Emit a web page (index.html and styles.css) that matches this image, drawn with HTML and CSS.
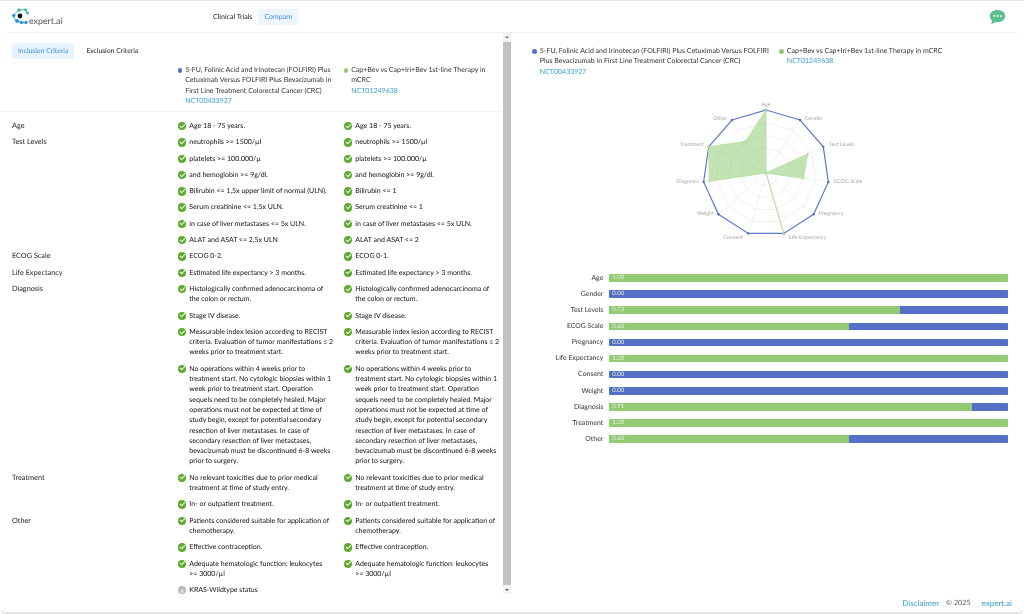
FILE: index.html
```html
<!DOCTYPE html>
<html lang="en">
<head>
<meta charset="utf-8">
<title>expert.ai Compare</title>
<link rel="stylesheet" href="styles.css">
</head>
<body>
<div class="app">
  <header class="topbar">
    <div class="brand">
      <svg class="logo" viewBox="0 0 20 18" width="20" height="18">
        <path class="logo-teal" d="M3 5.5 L7 2 L13 1.6 L15.5 5"/>
        <path class="logo-blue" d="M1.5 9 L4 12 M4 12 L9 14.5 L14 14.5"/>
        <circle class="logo-teal-f" cx="7" cy="2" r="1.7"/>
        <circle class="logo-teal-f" cx="13.5" cy="1.8" r="1.5"/>
        <circle class="logo-teal-f" cx="15.5" cy="5" r="1.6"/>
        <circle class="logo-blue-f" cx="1.8" cy="7.5" r="1.7"/>
        <circle class="logo-blue-f" cx="5" cy="13" r="2"/>
        <circle class="logo-blue-f" cx="9.5" cy="14.5" r="1.7"/>
        <circle class="logo-blue-f" cx="14" cy="14.5" r="1.7"/>
        <circle class="logo-ring" cx="8" cy="8" r="3.6"/>
        <circle class="logo-eye" cx="8" cy="8" r="2.4"/>
      </svg>
      <span class="brand-name">expert.ai</span>
    </div>
    <nav class="nav">
      <a class="nav-item">Clinical Trials</a>
      <a class="nav-item active">Compare</a>
    </nav>
    <svg class="chat" viewBox="0 0 17 16" width="17" height="16">
      <path class="chat-bubble" d="M8.5 1C4.1 1 .8 3.6.8 7c0 1.8.9 3.300 2.300 4.400-.1 1.200-.7 2.500-1.400 3.300 1.800-.1 3.400-.8 4.600-1.700.7.1 1.400.2 2.200.2 4.400 0 7.700-2.700 7.700-6.200S12.900 1 8.500 1z"/>
      <circle class="chat-dot" cx="5.300" cy="7" r=".9"/>
      <circle class="chat-dot" cx="8.500" cy="7" r=".9"/>
      <circle class="chat-dot" cx="11.700" cy="7" r=".9"/>
    </svg>
  </header>

  <main class="split">
    <section class="left">
      <div class="left-scroll">
        <div class="tabs">
          <a class="tab active">Inclusion Criteria</a>
          <a class="tab">Exclusion Criteria</a>
        </div>
        <div class="grid head">
          <div></div>
          <div class="trial"><i class="dot blue"></i><div>5-FU, Folinic Acid and Irinotecan (FOLFIRI) Plus<br>Cetuximab Versus FOLFIRI Plus Bevacizumab in<br>First Line Treatment Colorectal Cancer (CRC)<br><a class="link">NCT00433927</a></div></div>
          <div class="trial"><i class="dot green"></i><div>Cap+Bev vs Cap+Iri+Bev 1st-line Therapy in<br>mCRC<br><a class="link">NCT01249638</a></div></div>
        </div>
        <div class="grid body">
          <div class="cat">Age</div>
          <div class="cell"><p class="ok">Age 18 - 75 years.</p></div>
          <div class="cell"><p class="ok">Age 18 - 75 years.</p></div>

          <div class="cat">Test Levels</div>
          <div class="cell">
            <p class="ok">neutrophils &gt;= 1500/µl</p>
            <p class="ok">platelets &gt;= 100.000/µ</p>
            <p class="ok">and hemoglobin &gt;= 9g/dl.</p>
            <p class="ok">Bilirubin &lt;= 1,5x upper limit of normal (ULN).</p>
            <p class="ok">Serum creatinine &lt;= 1,5x ULN.</p>
            <p class="ok">in case of liver metastases &lt;= 5x ULN.</p>
            <p class="ok">ALAT and ASAT &lt;= 2,5x ULN</p>
          </div>
          <div class="cell">
            <p class="ok">neutrophils &gt;= 1500/µl</p>
            <p class="ok">platelets &gt;= 100.000/µ</p>
            <p class="ok">and hemoglobin &gt;= 9g/dl.</p>
            <p class="ok">Bilirubin &lt;= 1</p>
            <p class="ok">Serum creatinine &lt;= 1</p>
            <p class="ok">in case of liver metastases &lt;= 5x ULN.</p>
            <p class="ok">ALAT and ASAT &lt;= 2</p>
          </div>

          <div class="cat">ECOG Scale</div>
          <div class="cell"><p class="ok">ECOG 0-2.</p></div>
          <div class="cell"><p class="ok">ECOG 0-1.</p></div>

          <div class="cat">Life Expectancy</div>
          <div class="cell"><p class="ok">Estimated life expectancy &gt; 3 months.</p></div>
          <div class="cell"><p class="ok">Estimated life expectancy &gt; 3 months.</p></div>

          <div class="cat">Diagnosis</div>
          <div class="cell">
            <p class="ok">Histologically confirmed adenocarcinoma of<br>the colon or rectum.</p>
            <p class="ok">Stage IV disease.</p>
            <p class="ok">Measurable index lesion according to RECIST<br>criteria. Evaluation of tumor manifestations ≤ 2<br>weeks prior to treatment start.</p>
            <p class="ok">No operations within 4 weeks prior to<br>treatment start. No cytologic biopsies within 1<br>week prior to treatment start. Operation<br>sequels need to be completely healed. Major<br>operations must not be expected at time of<br>study begin, except for potential secondary<br>resection of liver metastases. In case of<br>secondary resection of liver metastases,<br>bevacizumab must be discontinued 6-8 weeks<br>prior to surgery.</p>
          </div>
          <div class="cell">
            <p class="ok">Histologically confirmed adenocarcinoma of<br>the colon or rectum.</p>
            <p class="ok">Stage IV disease.</p>
            <p class="ok">Measurable index lesion according to RECIST<br>criteria. Evaluation of tumor manifestations ≤ 2<br>weeks prior to treatment start.</p>
            <p class="ok">No operations within 4 weeks prior to<br>treatment start. No cytologic biopsies within 1<br>week prior to treatment start. Operation<br>sequels need to be completely healed. Major<br>operations must not be expected at time of<br>study begin, except for potential secondary<br>resection of liver metastases. In case of<br>secondary resection of liver metastases,<br>bevacizumab must be discontinued 6-8 weeks<br>prior to surgery.</p>
          </div>

          <div class="cat">Treatment</div>
          <div class="cell">
            <p class="ok">No relevant toxicities due to prior medical<br>treatment at time of study entry.</p>
            <p class="ok">In- or outpatient treatment.</p>
          </div>
          <div class="cell">
            <p class="ok">No relevant toxicities due to prior medical<br>treatment at time of study entry.</p>
            <p class="ok">In- or outpatient treatment.</p>
          </div>

          <div class="cat">Other</div>
          <div class="cell">
            <p class="ok">Patients considered suitable for application of<br>chemotherapy.</p>
            <p class="ok">Effective contraception.</p>
            <p class="ok">Adequate hematologic function: leukocytes<br>&gt;= 3000/µl</p>
            <p class="no">KRAS-Wildtype status</p>
          </div>
          <div class="cell">
            <p class="ok">Patients considered suitable for application of<br>chemotherapy.</p>
            <p class="ok">Effective contraception.</p>
            <p class="ok">Adequate hematologic function: leukocytes<br>&gt;= 3000/µl</p>
          </div>
        </div>
      </div>
      <div class="scrollbar">
        <span class="arrow up"></span>
        <span class="thumb"></span>
        <span class="arrow down"></span>
      </div>
    </section>

    <section class="right">
      <div class="legend">
        <div class="trial"><i class="dot blue"></i><div>5-FU, Folinic Acid and Irinotecan (FOLFIRI) Plus Cetuximab Versus FOLFIRI<br>Plus Bevacizumab in First Line Treatment Colorectal Cancer (CRC)<br><a class="link">NCT00433927</a></div></div>
        <div class="trial"><i class="dot green"></i><div>Cap+Bev vs Cap+Iri+Bev 1st-line Therapy in mCRC<br><a class="link">NCT01249638</a></div></div>
      </div>

      <svg class="radar" viewBox="-120 -81 240 162" width="240" height="162">
        <defs>
          <polygon id="ring" points="0,-63 34.06,-53 57.3,-26.17 62.36,8.96 47.61,41.26 17.75,60.45 -17.75,60.45 -47.61,41.26 -62.36,8.96 -57.3,-26.17 -34.06,-53"/>
        </defs>
        <g class="rings">
          <use href="#ring" transform="scale(.2)"/>
          <use href="#ring" transform="scale(.4)"/>
          <use href="#ring" transform="scale(.6)"/>
          <use href="#ring" transform="scale(.8)"/>
        </g>
        <path class="spokes" d="M0 0L0 -63M0 0L34.06 -53M0 0L57.3 -26.17M0 0L62.36 8.96M0 0L47.61 41.26M0 0L17.75 60.45M0 0L-17.75 60.45M0 0L-47.61 41.26M0 0L-62.36 8.96M0 0L-57.3 -26.17M0 0L-34.06 -53"/>
        <polygon class="series-blue" points="0,-63 34.06,-53 57.3,-26.17 62.36,8.96 47.61,41.26 17.75,60.45 -17.75,60.45 -47.61,41.26 -62.36,8.96 -57.3,-26.17 -34.06,-53"/>
        <g class="pts-blue">
          <circle cx="0" cy="-63" r="1.2"/><circle cx="34.06" cy="-53" r="1.2"/><circle cx="57.3" cy="-26.17" r="1.2"/><circle cx="62.36" cy="8.96" r="1.2"/><circle cx="47.61" cy="41.26" r="1.2"/><circle cx="17.75" cy="60.45" r="1.2"/><circle cx="-17.75" cy="60.45" r="1.2"/><circle cx="-47.61" cy="41.26" r="1.2"/><circle cx="-62.36" cy="8.96" r="1.2"/><circle cx="-57.3" cy="-26.17" r="1.2"/><circle cx="-34.06" cy="-53" r="1.2"/>
        </g>
        <polygon class="series-green" points="0,-63 0,0 41.83,-19.1 37.4,5.38 0,0 17.75,60.45 0,0 0,0 -56.75,8.15 -57.3,-26.17 -20.44,-31.8"/>
        <g class="pts-green">
          <circle cx="0" cy="-63" r=".8"/><circle cx="41.83" cy="-19.1" r=".8"/><circle cx="37.4" cy="5.38" r=".8"/><circle cx="17.75" cy="60.45" r=".8"/><circle cx="-56.75" cy="8.15" r=".8"/><circle cx="-57.3" cy="-26.17" r=".8"/><circle cx="-20.44" cy="-31.8" r=".8"/><circle cx="0" cy="0" r=".8"/>
        </g>
        <g class="axis-labels">
          <text x="0" y="-67" text-anchor="middle">Age</text>
          <text x="39" y="-53" text-anchor="start">Gender</text>
          <text x="63" y="-27" text-anchor="start">Test Levels</text>
          <text x="68" y="9.500" text-anchor="start">ECOG Scale</text>
          <text x="53" y="42" text-anchor="start">Pregnancy</text>
          <text x="23" y="65.500" text-anchor="start">Life Expectancy</text>
          <text x="-23" y="65.500" text-anchor="end">Consent</text>
          <text x="-52" y="42" text-anchor="end">Weight</text>
          <text x="-67" y="9.500" text-anchor="end">Diagnosis</text>
          <text x="-62" y="-27" text-anchor="end">Treatment</text>
          <text x="-39" y="-53" text-anchor="end">Other</text>
        </g>
      </svg>

      <div class="bars">
        <div class="bar-row"><span class="bar-label">Age</span><div class="track"><div class="fill" style="width:100%"></div><span class="val">1.00</span></div></div>
        <div class="bar-row"><span class="bar-label">Gender</span><div class="track"><div class="fill" style="width:0%"></div><span class="val">0.00</span></div></div>
        <div class="bar-row"><span class="bar-label">Test Levels</span><div class="track"><div class="fill" style="width:73%"></div><span class="val">0.73</span></div></div>
        <div class="bar-row"><span class="bar-label">ECOG Scale</span><div class="track"><div class="fill" style="width:60%"></div><span class="val">0.60</span></div></div>
        <div class="bar-row"><span class="bar-label">Pregnancy</span><div class="track"><div class="fill" style="width:0%"></div><span class="val">0.00</span></div></div>
        <div class="bar-row"><span class="bar-label">Life Expectancy</span><div class="track"><div class="fill" style="width:100%"></div><span class="val">1.00</span></div></div>
        <div class="bar-row"><span class="bar-label">Consent</span><div class="track"><div class="fill" style="width:0%"></div><span class="val">0.00</span></div></div>
        <div class="bar-row"><span class="bar-label">Weight</span><div class="track"><div class="fill" style="width:0%"></div><span class="val">0.00</span></div></div>
        <div class="bar-row"><span class="bar-label">Diagnosis</span><div class="track"><div class="fill" style="width:91%"></div><span class="val">0.91</span></div></div>
        <div class="bar-row"><span class="bar-label">Treatment</span><div class="track"><div class="fill" style="width:100%"></div><span class="val">1.00</span></div></div>
        <div class="bar-row"><span class="bar-label">Other</span><div class="track"><div class="fill" style="width:60%"></div><span class="val">0.60</span></div></div>
      </div>
    </section>
  </main>

  <footer class="footer">
    <a class="link">Disclaimer</a>
    <span class="copy">© 2025</span>
    <a class="link">expert.ai</a>
  </footer>
</div>
</body>
</html>
```
FILE: styles.css
```css
* { box-sizing: border-box; }
html, body { margin: 0; height: 100%; overflow: hidden; }
body {
  background: #fff;
  font-family: "Lato", "Noto Sans", sans-serif;
  font-size: 7px;
  line-height: 10.300px;
  color: #333;
  text-rendering: geometricPrecision;
}
p { margin: 0; }
.app {
  height: 614px;
  display: flex;
  flex-direction: column;
  border-top: 1px solid #e6e6e6;
  border-bottom: 2px solid #e4e4e4;
  border-radius: 0 0 6px 6px;
  will-change: transform;
}
.topbar {
  height: 32px;
  flex: none;
  margin: 0 6px;
  padding: 0 4px 0 6px;
  display: flex;
  align-items: center;
  border-bottom: 1px solid #f2f2f2;
  position: relative;
}
.brand { width: 195px; display: flex; align-items: flex-end; gap: 1px; height: 18px; }
.logo { flex: none; }
.logo-teal { fill: none; stroke: #45b8a0; stroke-width: 1; }
.logo-blue { fill: none; stroke: #2a9ad6; stroke-width: 1; }
.logo-teal-f { fill: #45b8a0; }
.logo-blue-f { fill: #2a9ad6; }
.logo-ring { fill: #fff; }
.logo-eye { fill: #111; }
.brand-name { font-size: 8.800px; line-height: 10px; color: #4a4f55; margin-left: -4px; }
.nav { display: flex; align-items: center; }
.nav-item { padding: 3px 6px; line-height: 10px; color: #222; border-radius: 2px; height: 16px; }
.nav-item.active { background: #eef5ff; color: #3f8fe8; }
.chat { margin-left: auto; margin-right: 8px; }
.chat-bubble { fill: #5cc08e; }
.chat-dot { fill: #fff; }

.split { flex: 1; min-height: 0; display: flex; }
.left { width: 511px; flex: none; display: flex; min-height: 0; }
.left-scroll { flex: 1; min-width: 0; overflow: hidden; }
.scrollbar {
  width: 8px;
  flex: none;
  background: #f3f3f3;
  display: flex;
  flex-direction: column;
  align-items: center;
  height: 561px;
}
.thumb { flex: 1; width: 8px; background: #c2c2c2; }
.arrow { height: 9px; width: 8px; flex: none; position: relative; }
.arrow::after {
  content: "";
  position: absolute;
  left: 2px;
  border-left: 2px solid transparent;
  border-right: 2px solid transparent;
}
.arrow.up::after { top: 3px; border-bottom: 2px solid #777; }
.arrow.down::after { top: 4px; border-top: 2px solid #555; }

.tabs { display: flex; padding: 10px 0 0 12px; height: 32px; font-size: 6.800px; }
.tab { padding: 3px 6px; height: 16px; line-height: 10px; border-radius: 2px; color: #222; margin-right: 6px; }
.tab.active { background: #e9f2ff; color: #3f8fe8; }

.grid { display: grid; grid-template-columns: 165.700px 166px 1fr; }
.head { padding: 0 12px 3px 12px; height: 47px; border-bottom: 1px solid #f2f2f2; }
.trial { display: flex; gap: 3px; color: #333; }
.dot { width: 4.500px; height: 4.500px; border-radius: 50%; flex: none; margin-top: 3px; }
.dot.blue { background: #5470c6; }
.dot.green { background: #91cc75; }
.link { color: #3ba0d8; }

.body { padding: 9px 12px 0 12px; }
.cat { color: #222; font-size: 7.300px; }
.cell { display: flex; flex-direction: column; gap: 6px; padding-bottom: 6px; }
.ok, .no { padding-left: 11.600px; position: relative; color: #111; white-space: nowrap; }
.ok::before, .no::before {
  content: "";
  position: absolute;
  left: 0;
  top: 1px;
  width: 8.400px;
  height: 8.400px;
  border-radius: 50%;
  background: #5eab2f;
}
.ok::after {
  content: "";
  position: absolute;
  left: 2.200px;
  top: 2.700px;
  width: 4px;
  height: 2.200px;
  border-left: 1.100px solid #fff;
  border-bottom: 1.100px solid #fff;
  transform: rotate(-45deg);
}
.no::before { background: #b9b9b9; }
.no::after {
  content: "×";
  position: absolute;
  left: 2.300px;
  top: .5px;
  font-size: 8px;
  line-height: 10px;
  color: #fff;
}

.right { flex: 1; min-width: 0; display: flex; flex-direction: column; padding: 13px 16px 0 21.300px; }
.legend { display: flex; gap: 3px; height: 45.500px; }
.legend .trial:first-child { flex: 0 0 244px; }
.legend .trial:last-child { flex: 1; }
.radar { display: block; align-self: center; margin-left: -9.300px; overflow: visible; }
.rings use { fill: none; stroke: #eeeeee; }
.rings use:nth-child(1) { stroke-width: 4; }
.rings use:nth-child(2) { stroke-width: 2.200; }
.rings use:nth-child(3) { stroke-width: 1.500; }
.rings use:nth-child(4) { stroke-width: 1.100; }
.spokes { stroke: #eeeeee; stroke-width: .8; fill: none; }
.series-blue { fill: none; stroke: #5f7bcc; stroke-width: 1.200; }
.pts-blue circle { fill: #5470c6; }
.series-green { fill: rgba(145, 204, 117, .55); stroke: #b7dea4; stroke-width: .8; }
.pts-green circle { fill: #fff; stroke: #91cc75; stroke-width: .6; }
.axis-labels text { font-size: 5.400px; fill: #aaa; font-family: "Lato", sans-serif; }

.bars { margin-top: 20.500px; display: flex; flex-direction: column; gap: 8px; }
.bar-row { display: flex; align-items: center; height: 8.100px; gap: 6px; }
.bar-label { width: 71px; text-align: right; color: #333; flex: none; font-size: 6.900px; }
.track { flex: 1; height: 7.600px; background: #5470c6; position: relative; border-radius: 1px; overflow: hidden; }
.fill { height: 100%; background: #91cc75; }
.val { position: absolute; left: 3px; top: 0; font-size: 6px; line-height: 8px; color: #e8f0e0; }

.footer {
  position: absolute;
  right: 12px;
  bottom: 4px;
  display: flex;
  gap: 7px;
  font-size: 8px;
  line-height: 10px;
}
.copy { color: #555; margin-right: 4px; font-size: 7.200px; }
```
